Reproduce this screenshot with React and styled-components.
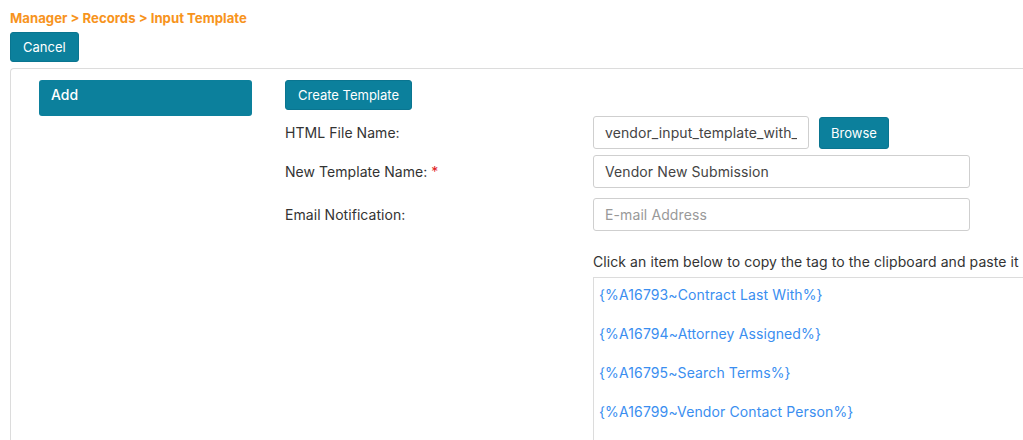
import React from 'react'
import styled, { createGlobalStyle } from 'styled-components'

const Global = createGlobalStyle`
  body {
    margin: 0;
    background: #fff;
    font-family: Inter, "Noto Sans", sans-serif;
    color: #333;
    overflow: hidden;
  }
`

const Page = styled.div`
  padding: 10px 0 0 10px;
  width: 1023px;
  height: 440px;
  box-sizing: border-box;
  overflow: hidden;
`

const Crumbs = styled.div`
  color: #f7941d;
  font-weight: 700;
  font-size: 13.2px;
  line-height: 16px;
  height: 16px;
`

const Btn = styled.button`
  background: #0c809c;
  color: #fff;
  border: 1px solid #0a7590;
  border-radius: 3px;
  font-family: Inter, "Noto Sans", sans-serif;
  font-size: 13px;
  height: ${p => p.h || 30}px;
  padding: 0 ${p => p.px || 12}px;
  cursor: pointer;
`

const TopBar = styled.div`
  margin-top: 6px;
  height: 30px;
`

const Panel = styled.div`
  margin-top: 6px;
  border-top: 1px solid #dcdcdc;
  border-left: 1px solid #dcdcdc;
  border-top-left-radius: 4px;
  padding: 11px 0 0 28px;
  display: flex;
  gap: 33px;
  height: 400px;
`

const Side = styled.div`
  width: 213px;
  flex: none;
`

const AddBar = styled.div`
  background: #0c809c;
  color: #fff;
  border-radius: 3px;
  height: 36px;
  box-sizing: border-box;
  padding: 6px 12px;
  font-size: 14px;
  font-weight: 500;
`

const Main = styled.div`
  flex: 1;
  min-width: 0;
`

const Row = styled.div`
  display: flex;
  align-items: center;
  margin-top: ${p => p.mt || 0}px;
`

const Label = styled.div`
  width: 308px;
  flex: none;
  font-size: 14px;
  letter-spacing: 0.05px;
  color: #333;
`

const Req = styled.span`
  color: #e02020;
  margin-left: 4px;
`

const Input = styled.input`
  width: ${p => p.w}px;
  height: 33px;
  box-sizing: border-box;
  border: 1px solid #cfcfcf;
  border-radius: 3px;
  padding: 0 11px;
  font-family: Inter, "Noto Sans", sans-serif;
  font-size: 14px;
  letter-spacing: 0.1px;
  color: #444;
  &::placeholder { color: #999; }
`

const Hint = styled.div`
  margin: 22px 0 0 308px;
  font-size: 14px;
  letter-spacing: 0.08px;
  color: #333;
  white-space: nowrap;
  line-height: 18px;
`

const TagBox = styled.div`
  margin: 6px 0 0 308px;
  border: 1px solid #dcdcdc;
  border-right: none;
  height: 200px;
  padding: 8px 0 0 5px;
`

const Tag = styled.div`
  color: #3a8ef0;
  font-size: 14px;
  letter-spacing: 0.12px;
  line-height: 18px;
  height: 39px;
  cursor: pointer;
`

const tags = [
  '{%A16793~Contract Last With%}',
  '{%A16794~Attorney Assigned%}',
  '{%A16795~Search Terms%}',
  '{%A16799~Vendor Contact Person%}',
]

export default function App() {
  return (
    <Page>
      <Global />
      <Crumbs>Manager &gt; Records &gt; Input Template</Crumbs>
      <TopBar>
        <Btn>Cancel</Btn>
      </TopBar>
      <Panel>
        <Side>
          <AddBar>Add</AddBar>
        </Side>
        <Main>
          <Btn>Create Template</Btn>
          <Row mt={6}>
            <Label>HTML File Name:</Label>
            <Input w={216} defaultValue="vendor_input_template_with_" readOnly />
            <Btn h={32} px={11} style={{ marginLeft: 10 }}>Browse</Btn>
          </Row>
          <Row mt={6}>
            <Label>New Template Name:<Req>*</Req></Label>
            <Input w={377} defaultValue="Vendor New Submission" />
          </Row>
          <Row mt={10}>
            <Label>Email Notification:</Label>
            <Input w={377} placeholder="E-mail Address" />
          </Row>
          <Hint>Click an item below to copy the tag to the clipboard and paste it</Hint>
          <TagBox>
            {tags.map(t => <Tag key={t}>{t}</Tag>)}
          </TagBox>
        </Main>
      </Panel>
    </Page>
  )
}
